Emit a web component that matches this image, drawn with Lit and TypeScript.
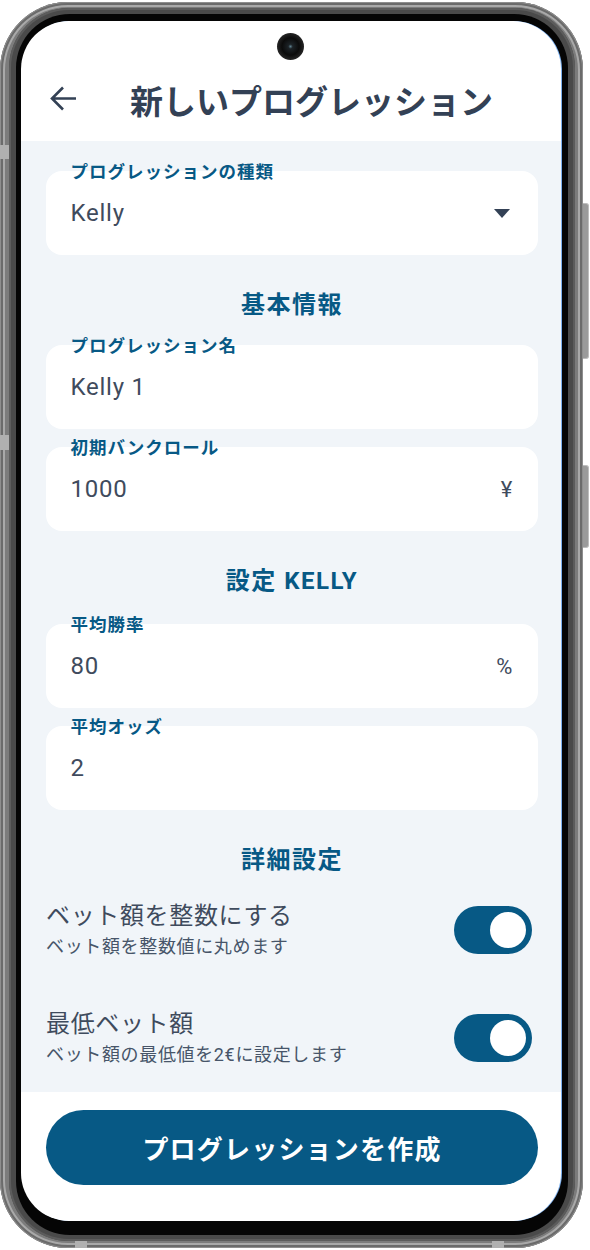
import { LitElement, html, css } from "lit";
import { customElement } from "lit/decorators.js";

@customElement("app-root")
export class AppRoot extends LitElement {
  static styles = css`
    :host {
      display: block;
      position: relative;
      width: 590px;
      height: 1250px;
      background: #fff;
      font-family: Roboto, "Noto Sans CJK JP", sans-serif;
      overflow: hidden;
    }
    .stage { padding-top: 2px; width: 583px; }
    .ring1 {
      position: relative;
      height: 1246px;
      box-sizing: border-box;
      padding: 6px 8px 7px 9px;
      border-radius: 68px;
      background: #7c7c7c;
      box-shadow:
        inset 0 0 0 1px #8e8e8e,
        inset 0 0 0 3px #6b6b6b,
        inset 0 0 0 5px #a9a9a9;
    }
    .ring2 {
      height: 100%;
      box-sizing: border-box;
      padding: 6px 7px 6px 7px;
      border-radius: 60px;
      background: #4a4a4a;
      box-shadow: inset 0 0 0 2px #5c5c5c;
    }
    .ring3 {
      height: 100%;
      box-sizing: border-box;
      padding: 7px 7px 14px 5px;
      border-radius: 54px;
      background: #050505;
    }
    .screen {
      position: relative;
      width: 540px;
      height: 1200px;
      border-radius: 48px;
      overflow: hidden;
      background: #fff;
      box-shadow: 1px 0 0 #7db0ee;
      display: flex;
      flex-direction: column;
      color: #334155;
    }
    .band { position: absolute; background: #b0b0b0; }
    .band.l1 { left: 0; top: 143px; width: 9px; height: 14px; }
    .band.l2 { left: 0; top: 433px; width: 9px; height: 15px; }
    .band.b1 { left: 75px; bottom: 0; width: 12px; height: 7px; }
    .band.b2 { left: 492px; bottom: 0; width: 12px; height: 7px; }
    .side {
      position: absolute;
      left: 583px;
      width: 6px;
      box-sizing: border-box;
      background: #9a9a9a;
      border: 1px solid #bdbdbd;
      border-left: 0;
      border-radius: 0 3px 3px 0;
    }
    .side.s1 { top: 203px; height: 156px; }
    .side.s2 { top: 465px; height: 83px; }
    .camera {
      position: absolute;
      left: 256px;
      top: 12px;
      width: 27px;
      height: 27px;
      border-radius: 50%;
      background: radial-gradient(circle at 50% 50%, #5d7f8c 0, #1c2226 12%, #0b0b0b 45%, #2a2a2a 75%, #14182a 100%);
    }
    header {
      height: 120px;
      flex: none;
      box-sizing: border-box;
      padding: 36px 0 0 28px;
      display: flex;
      align-items: center;
    }
    .back { width: 28px; height: 28px; display: block; flex: none; }
    h1 {
      margin: 7px 0 0 53px;
      font-size: 33px;
      line-height: 44px;
      font-weight: 700;
      color: #334155;
      white-space: nowrap;
    }
    main {
      height: 951px;
      flex: none;
      box-sizing: border-box;
      background: #f1f5f9;
      padding: 30px 23px 0 25px;
    }
    .field {
      position: relative;
      height: 84px;
      box-sizing: border-box;
      background: #fff;
      border-radius: 16px;
      padding: 0 25px 0 24.5px;
      display: flex;
      align-items: center;
      justify-content: space-between;
      font-size: 24px;
      color: #3f4b5d;
      letter-spacing: 0.75px;
      margin-bottom: 18px;
    }
    .field.last { margin-bottom: 0; }
    .label {
      position: absolute;
      left: 24.5px;
      top: -11px;
      font-size: 17.5px;
      line-height: 24px;
      font-weight: 700;
      color: #075985;
      letter-spacing: 1px;
      white-space: nowrap;
    }
    .unit { font-size: 22px; }
    .tri { width: 16px; height: 9px; display: block; margin-right: 3px; }
    h2 {
      margin: 0;
      height: 72px;
      box-sizing: border-box;
      padding-top: 14px;
      text-align: center;
      font-size: 24px;
      line-height: 36px;
      font-weight: 700;
      color: #075985;
      letter-spacing: 1.5px;
    }
    h2.s2 { height: 93px; padding-top: 32px; }
    h2.s3 { height: 96px; padding-top: 32px; }
    .rows { display: flex; flex-direction: column; gap: 60px; }
    .row {
      height: 48px;
      display: flex;
      align-items: center;
      justify-content: space-between;
      padding-right: 6px;
    }
    .row-text { margin-top: 2px; }
    .row-title { font-size: 24px; line-height: 32px; color: #3f4b5d; letter-spacing: 0.65px; white-space: nowrap; }
    .row-sub { font-size: 18px; line-height: 30px; color: #475569; letter-spacing: 0.65px; white-space: nowrap; }
    .toggle {
      position: relative;
      width: 78px;
      height: 48px;
      border-radius: 24px;
      background: #075985;
      flex: none;
    }
    .knob {
      position: absolute;
      right: 6px;
      top: 6px;
      width: 36px;
      height: 36px;
      border-radius: 50%;
      background: #fff;
    }
    footer {
      flex: 1;
      box-sizing: border-box;
      padding: 18px 23px 0 25px;
    }
    .cta {
      height: 75px;
      border-radius: 38px;
      background: #075985;
      color: #fff;
      display: flex;
      align-items: center;
      justify-content: center;
      font-size: 26px;
      font-weight: 700;
      letter-spacing: 1.2px;
      white-space: nowrap;
    }
  `;

  private field(label: string, value: string, trailing: unknown = "", last = false) {
    return html`<div class="field ${last ? "last" : ""}">
      <span class="label">${label}</span>
      <span>${value}</span>
      ${trailing}
    </div>`;
  }

  private row(title: string, sub: string) {
    return html`<div class="row">
      <div class="row-text">
        <div class="row-title">${title}</div>
        <div class="row-sub">${sub}</div>
      </div>
      <div class="toggle"><div class="knob"></div></div>
    </div>`;
  }

  render() {
    const tri = html`<svg class="tri" viewBox="0 0 16 9"><path d="M0 0h16L8 9z" fill="#334155"></path></svg>`;
    return html`
      <div class="stage">
        <div class="ring1">
          <div class="ring2">
            <div class="ring3">
              <div class="screen">
                <div class="camera"></div>
                <header>
                  <svg class="back" viewBox="0 0 28 28" fill="none" stroke="#334155" stroke-width="2.6">
                    <path d="M27 13.5H3M14 2.5 3 13.5l11 11"></path>
                  </svg>
                  <h1>新しいプログレッション</h1>
                </header>
                <main>
                  ${this.field("プログレッションの種類", "Kelly", tri)}
                  <h2>基本情報</h2>
                  ${this.field("プログレッション名", "Kelly 1")}
                  ${this.field("初期バンクロール", "1000", html`<span class="unit">¥</span>`, true)}
                  <h2 class="s2">設定 KELLY</h2>
                  ${this.field("平均勝率", "80", html`<span class="unit">%</span>`)}
                  ${this.field("平均オッズ", "2", "", true)}
                  <h2 class="s3">詳細設定</h2>
                  <div class="rows">
                    ${this.row("ベット額を整数にする", "ベット額を整数値に丸めます")}
                    ${this.row("最低ベット額", "ベット額の最低値を2€に設定します")}
                  </div>
                </main>
                <footer><div class="cta">プログレッションを作成</div></footer>
              </div>
            </div>
          </div>
          <div class="band l1"></div>
          <div class="band l2"></div>
          <div class="band b1"></div>
          <div class="band b2"></div>
        </div>
      </div>
      <div class="side s1"></div>
      <div class="side s2"></div>
    `;
  }
}
